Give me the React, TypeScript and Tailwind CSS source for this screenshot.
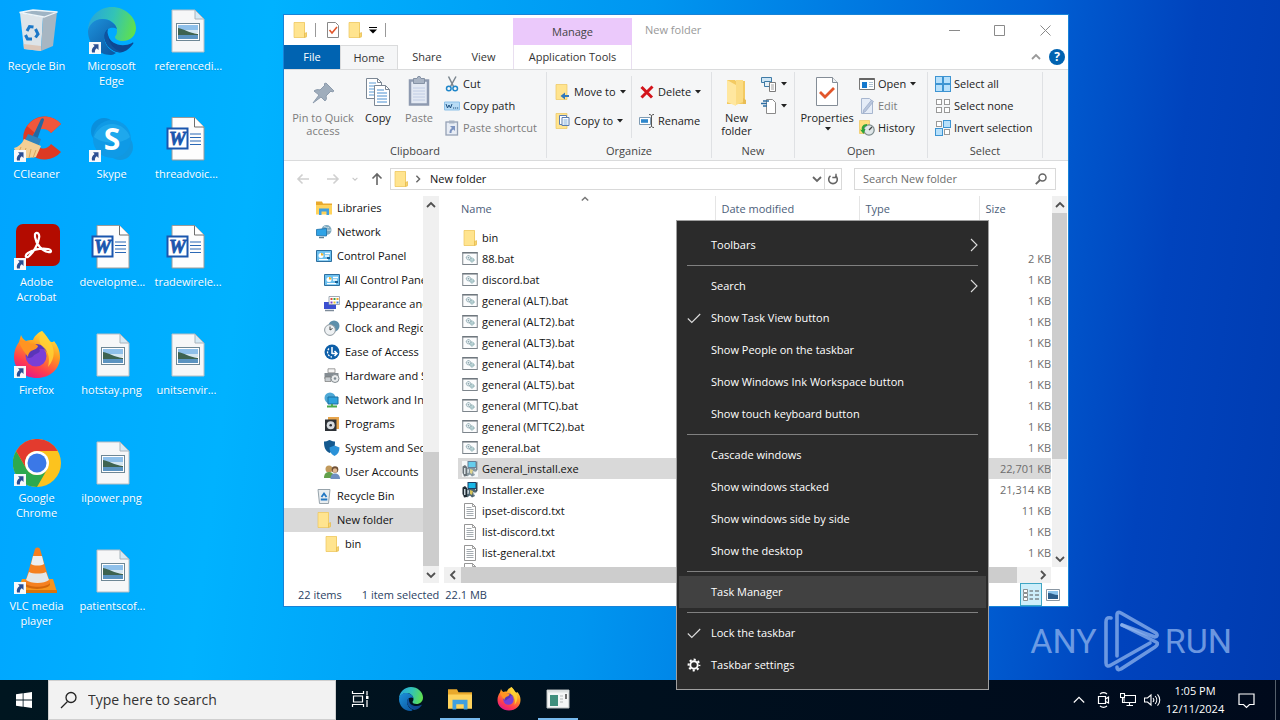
import React from 'react'

type IconProps = { className?: string }

/* ---------- small shared icons ---------- */

const Folder = ({ className = 'size-4' }: IconProps) => (
  <svg viewBox="0 0 16 16" className={className}>
    <path d="M2 .5h11v11l1.5-.5v4.5H2z" fill="#f7d774" />
    <path d="M2 .5h10.500v15H2z" fill="#ffe48f" stroke="#ecc65e" strokeWidth=".7" />
    <path d="M12.500 11.500l2-1v4l-2 1z" fill="#fbd66f" stroke="#e0b548" strokeWidth=".6" />
  </svg>
)

const Caret = () => (
  <svg viewBox="0 0 6 4" className="ml-px h-1 w-1.5 shrink-0">
    <path d="M0 0h6L3 3.500z" fill="#222" />
  </svg>
)

const BatIcon = ({ className = 'size-4' }: IconProps) => (
  <svg viewBox="0 0 16 16" className={className}>
    <rect x=".75" y="1.500" width="14.500" height="12" fill="#fbfcfd" stroke="#7d858c" />
    <path d="M.5 1.800h15" stroke="#6f777e" strokeWidth="1.500" />
    <circle cx="6.500" cy="6.700" r="2.200" fill="#dfe9ec" stroke="#7f9aa3" strokeDasharray="1 .5" />
    <circle cx="10" cy="9" r="2" fill="#cfe3e6" stroke="#6f979c" strokeDasharray="1 .5" />
    <circle cx="6.500" cy="6.700" r=".7" fill="#7f9aa3" />
    <circle cx="10" cy="9" r=".6" fill="#5d8a90" />
  </svg>
)

const TxtIcon = ({ className = 'size-4' }: IconProps) => (
  <svg viewBox="0 0 16 16" className={className}>
    <path d="M2.500.5h8l3 3v12h-11z" fill="#fff" stroke="#8a8a8a" strokeWidth=".9" />
    <path d="M10.500.5v3h3" fill="none" stroke="#8a8a8a" strokeWidth=".8" />
    <path d="M4.500 4.500h5M4.500 6.500h7M4.500 8.500h7M4.500 10.500h7M4.500 12.500h7" stroke="#8d959c" strokeWidth=".8" />
  </svg>
)

const InstallIcon = ({ className = 'size-4', faded }: IconProps & { faded?: boolean }) => (
  <svg viewBox="0 0 16 16" className={className}>
    {faded && <path d="M0 0h16v16H0z" fill="#f4f7f8" />}
    <g opacity={faded ? 0.65 : 1}>
      <rect x="6" y=".5" width="8" height="6" fill="#19b7e6" stroke="#1b3f66" />
      <path d="M14 1l1.500-1v9L14 10z" fill="#33414d" />
      <path d="M.5 5.500L3 4l2 2v9l-3 .5-1-3H.5z" fill="#1f2b33" />
      <path d="M5 7h8l2 3-2 1v3l-3 1.500-2-2-3 2z" fill="#4c6470" />
      <path d="M8 8l3 1-1 4-2-1z" fill="#d6c257" />
      <path d="M2 7h1.500v6H2z" fill="#c9d3d9" />
      <path d="M11 10l3 1-2 3zM5.500 8l1.500.5L6.500 12H5.500z" fill="#e8eef1" />
    </g>
  </svg>
)

const Chevron = ({ d, className = 'size-2.5' }: IconProps & { d: 'up' | 'down' | 'left' | 'right' }) => {
  const paths = { up: 'M1 7l4-4 4 4', down: 'M1 3l4 4 4-4', left: 'M7 1L3 5l4 4', right: 'M3 1l4 4-4 4' }
  return (
    <svg viewBox="0 0 10 10" className={className}>
      <path d={paths[d]} fill="none" stroke="currentColor" strokeWidth="1.800" />
    </svg>
  )
}

/* ---------- desktop icons ---------- */

const ShortcutArrow = () => (
  <svg viewBox="0 0 12 12" className="absolute bottom-px left-px size-3">
    <path d="M0 0h12v12H0z" fill="#f7f9fb" />
    <path d="M4 2.200h5.500V8L7.800 6.200C6.300 7.300 5.700 8.500 6 10.500H3C2.300 7.800 3.400 5.500 5.600 4z" fill="#2b4f93" />
  </svg>
)

const RecycleBinBig = () => (
  <svg viewBox="0 0 48 48" className="size-12">
    <path d="M7 6l23 4-2 34-17-2z" fill="#dde4e9" />
    <path d="M30 10l14-5-4 34-12 5z" fill="#a7b6c2" />
    <path d="M6.500 5.500L20 3l24.500 2L31 10z" fill="#9fb4c4" stroke="#eef4f8" strokeWidth="1.300" />
    <path d="M10.500 37l17.500 2v5l-17-2z" fill="#dcbfae" opacity=".8" />
    <g fill="none" stroke="#1c78c8" strokeWidth="3">
      <path d="M14 24l2.500-4.500 4 .5" />
      <path d="M22.500 22l2.500 5-2.500 3.500" />
      <path d="M19 32h-4.500L12.500 28" />
    </g>
  </svg>
)

const EdgeLogo = ({ className = 'size-12' }: IconProps) => (
  <svg viewBox="0 0 48 48" className={className}>
    <defs>
      <linearGradient id="edge-top" x1="0" y1=".3" x2="1" y2=".5">
        <stop offset="0" stopColor="#27a5dc" />
        <stop offset=".5" stopColor="#32c3b7" />
        <stop offset="1" stopColor="#5fe04e" />
      </linearGradient>
      <linearGradient id="edge-left" x1="0" y1="0" x2=".8" y2="1">
        <stop offset="0" stopColor="#1d93dc" />
        <stop offset="1" stopColor="#0c59a4" />
      </linearGradient>
    </defs>
    <path d="M0 24C0 10 11 0 24 0s24 10 24 21c0 8-6 13-13 13-5 0-8-2-8-4 0-1 2-2 2-6 0-6-6-12-14-12C8 12 2 17 0 24z" fill="url(#edge-top)" />
    <path d="M0 24c1-7 7-12 14-12 8 0 14 5 15 10-3-2-10-2-12 4-3 8 3 17 11 20-2 1-3 2-5 2C10 48 0 37 0 24z" fill="url(#edge-left)" />
    <path d="M20 22c-6 4-4 14 2 19 6 6 15 7 23-4 1-1 0-2-1-1-10 5-22 1-24-8-1-2-1-4 0-6z" fill="#0e4792" />
    <path d="M20 22c-6 4-4 14 2 19 3 3 8 5 12 4-8-2-13-8-14-17-1-2-1-4 0-6z" fill="#10549f" />
  </svg>
)

const CCleanerLogo = () => (
  <svg viewBox="0 0 48 48" className="size-12">
    <path d="M48 9A21.500 21.500 0 1 0 48 37L38 29a10 10 0 1 1 0-11z" fill="#dd3a24" />
    <path d="M48 9A21.500 21.500 0 0 0 14 11l8 7a10 10 0 0 1 16 0z" fill="#f0573b" />
    <path d="M28 4c1-1 3-1 3 1l-7 20-5-2z" fill="#2369a2" />
    <path d="M15 19l13 5-3 9-14-6z" fill="#2e83bd" />
    <path d="M11 24l17 7-5 11-17 2-5-11c4-1 8-4 10-9z" fill="#f3cf95" />
    <path d="M8 32l-3 7M13 33l-3 9M18 34l-2 9M23 35l-3 8" stroke="#d9a65b" strokeWidth="1" />
  </svg>
)

const SkypeLogo = () => (
  <svg viewBox="0 0 48 48" className="size-12">
    <circle cx="16" cy="16" r="13" fill="#0a8fdc" />
    <circle cx="32" cy="32" r="13" fill="#1198e0" />
    <circle cx="24" cy="24" r="19" fill="#0f9ae6" />
    <path d="M6 22a19 19 0 0 1 36 0c-8 7-26 8-36 0z" fill="#28b2f2" opacity=".6" />
    <text x="24" y="35" textAnchor="middle" fontSize="30" fontWeight="700" fill="#fff" fontFamily="Open Sans, sans-serif">S</text>
  </svg>
)

const AcrobatLogo = () => (
  <svg viewBox="0 0 48 48" className="size-12">
    <rect x="3" y="1" width="44" height="42" rx="7" fill="#b30b00" />
    <path
      d="M22 11c2-3 5 0 4 4-1 7-6 15-11 19-3 1-3-2 0-4 5-3 13-5 20-4 4 1 4 4 0 3-6-1-12-8-13-15 0-1 0-2 0-3z"
      fill="none" stroke="#fff" strokeWidth="2.200"
    />
  </svg>
)

const FirefoxLogo = ({ className = 'size-12' }: IconProps) => (
  <svg viewBox="0 0 48 48" className={className}>
    <defs>
      <linearGradient id="fx-body" x1=".8" y1="0" x2=".3" y2="1">
        <stop offset="0" stopColor="#fff04a" />
        <stop offset=".4" stopColor="#ff9a1f" />
        <stop offset=".75" stopColor="#ff3d4f" />
        <stop offset="1" stopColor="#e3168c" />
      </linearGradient>
    </defs>
    <path d="M29 0c3 3 5 6 7 9 1 2 4 3 5 1 4 5 6 10 6 16 0 12-10 21-23 21S1 38 1 26c0-6 2-11 5-15l2-7c1 3 3 5 5 6 2-1 4-1 7-1 1-3 4-7 9-9z" fill="url(#fx-body)" />
    <circle cx="23" cy="25" r="10.500" fill="#7a3fd6" />
    <path d="M13 22c0-6 5-9 10-9 6 0 10 4 11 8-2-3-5-4-8-3 2 2 0 4-3 5-3 1-3 4-7 4-2 0-3-2-3-5z" fill="#5a35b8" />
    <path d="M6 11c4-2 9-1 12 2 3-1 5 0 7 2 0 2-4 4-7 5-2 2-3 3-3 6-3-4-7-9-9-15z" fill="#ff9422" />
    <path d="M29 0c3 3 5 6 7 9 6 8 7 18-1 27 2-8 1-15-5-20-5-4-4-11-1-16z" fill="#ffd536" opacity=".8" />
  </svg>
)

const ChromeLogo = () => (
  <svg viewBox="0 0 48 48" className="size-12">
    <circle cx="24" cy="24" r="24" fill="#fcc31e" />
    <path d="M3.200 12A24 24 0 0 0 24 48l10.400-18A12 12 0 0 1 13.600 30z" fill="#2da94f" />
    <path d="M3.200 12A24 24 0 0 1 44.800 12H24A12 12 0 0 0 13.600 30z" fill="#e33b2e" />
    <circle cx="24" cy="24" r="12" fill="#fff" />
    <circle cx="24" cy="24" r="9.500" fill="#3b78e7" />
  </svg>
)

const VlcLogo = () => (
  <svg viewBox="0 0 48 48" className="size-12">
    <path d="M9 32h31l4 13H4z" fill="#f7941d" />
    <path d="M4 43h40v3H4z" fill="#d9730c" />
    <ellipse cx="24" cy="37" rx="13" ry="5" fill="#d4660a" />
    <path d="M22 2c1-2 4-2 5 0l10 34c-4 5-21 5-25 0z" fill="#f58020" />
    <path d="M20 9h9l2 8c-3 2-10 2-13 0z" fill="#eceff1" />
    <path d="M16 25c4 2 13 2 17 0l3 8c-5 4-18 4-23 0z" fill="#e3e6e8" />
  </svg>
)

const WordFile = () => (
  <svg viewBox="0 0 48 48" className="size-12">
    <path d="M9 2.500h22.500L41 12v33H9z" fill="#fdfdfd" stroke="#9a9a9a" />
    <path d="M31.500 2.500V12H41" fill="#fff" stroke="#6e6e6e" />
    <path d="M27 19h11M27 22.500h11M27 26h11M27 29.500h11" stroke="#2b68b5" strokeWidth="1.200" />
    <rect x="4.500" y="13.500" width="20" height="20" fill="#fff" stroke="#1a56ae" strokeWidth="2" />
    <text x="14.500" y="30" textAnchor="middle" fontSize="19" fontStyle="italic" fontWeight="700" fill="#1a56ae" stroke="#1a56ae" strokeWidth=".8" fontFamily="Liberation Serif, serif">W</text>
  </svg>
)

const PngFile = () => (
  <svg viewBox="0 0 48 48" className="size-12">
    <path d="M9 3h23l9 9v33H9z" fill="#f6f7f8" stroke="#b9bec3" />
    <path d="M32 3v9h9z" fill="#d5e9f5" stroke="#a9b4bc" />
    <rect x="13.500" y="16.500" width="23" height="17" fill="#fff" stroke="#6e8795" />
    <path d="M15 18h20v6H15z" fill="#8fc0ea" />
    <path d="M15 23h20v3H15z" fill="#d4e6f2" />
    <path d="M15 21c6 1 11 5 20 6v1H15z" fill="#3e6350" />
    <path d="M15 28h20v4H15z" fill="#5b93c0" />
  </svg>
)

const desktopIcons: { label: string; icon: React.ReactNode; shortcut?: boolean }[] = [
  { label: 'Recycle Bin', icon: <RecycleBinBig /> },
  { label: 'CCleaner', icon: <CCleanerLogo />, shortcut: true },
  { label: 'Adobe Acrobat', icon: <AcrobatLogo />, shortcut: true },
  { label: 'Firefox', icon: <FirefoxLogo />, shortcut: true },
  { label: 'Google Chrome', icon: <ChromeLogo />, shortcut: true },
  { label: 'VLC media player', icon: <VlcLogo />, shortcut: true },
  { label: 'Microsoft Edge', icon: <EdgeLogo />, shortcut: true },
  { label: 'Skype', icon: <SkypeLogo />, shortcut: true },
  { label: 'developme...', icon: <WordFile /> },
  { label: 'hotstay.png', icon: <PngFile /> },
  { label: 'ilpower.png', icon: <PngFile /> },
  { label: 'patientscof...', icon: <PngFile /> },
  { label: 'referencedi...', icon: <PngFile /> },
  { label: 'threadvoic...', icon: <WordFile /> },
  { label: 'tradewirele...', icon: <WordFile /> },
  { label: 'unitsenvir...', icon: <PngFile /> },
]

const DesktopIcons = () => (
  <div className="-ml-px grid w-max auto-cols-[75px] grid-flow-col grid-rows-[repeat(6,108px)]">
    {desktopIcons.map((item) => (
      <button key={item.label} className="flex flex-col items-center gap-[3px] pt-[7px] leading-[15px] text-white">
        <span className="relative">
          {item.icon}
          {item.shortcut && <ShortcutArrow />}
        </span>
        <span className="w-[72px] px-1 text-center text-shadow-2xs">{item.label}</span>
      </button>
    ))}
  </div>
)

/* ---------- ribbon ---------- */

const Pin = () => (
  <svg viewBox="0 0 32 32" className="size-8">
    <path d="M19 7l8 8-2 1-1-1-5 5c1 3 0 4-1 5l-4-4-8 6 6-8-5-4c1-1 4-2 6-1l5-5-1-1z" fill="#9fadbc" stroke="#8d9cad" />
  </svg>
)

const Copy = () => (
  <svg viewBox="0 0 32 32" className="size-8">
    <path d="M4.500 2.500h11l4 4v16h-15z" fill="#fff" stroke="#7b8794" />
    <path d="M15.500 2.500v4h4" fill="none" stroke="#7b8794" />
    <path d="M7 7h7M7 10h10M7 13h6M7 16h5M7 19h5" stroke="#5a9bd5" />
    <path d="M12.500 9.500h11l4 4v16h-15z" fill="#fff" stroke="#7b8794" />
    <path d="M23.500 9.500v4h4" fill="none" stroke="#7b8794" />
    <path d="M15 14h7M15 17h10M15 20h10M15 23h10M15 26h10" stroke="#4a8fd0" />
  </svg>
)

const Paste = () => (
  <svg viewBox="0 0 32 32" className="size-8">
    <rect x="7" y="4.500" width="18" height="24" fill="#e3e9f3" stroke="#8e9ab0" strokeWidth="2.500" />
    <path d="M10.500 2.500H14l1-2h2l1 2h3.500v5h-11z" fill="#a9b4c4" stroke="#8592a5" />
    <path d="M10 12h12M10 15h12M10 18h12M10 21h12M10 24h12" stroke="#c0cce4" />
  </svg>
)

const NewFolderBig = () => (
  <svg viewBox="0 0 32 32" className="size-8">
    <path d="M6 4h8l1 1h9v23H6z" fill="#f3ca62" />
    <path d="M6 4l9 5v21l-9-4z" fill="#ffe79f" />
    <path d="M15 4h7v22l-7 3z" fill="#fbdc84" />
    <path d="M22 22l3 2v4h-3z" fill="#e9bd55" />
  </svg>
)

const Properties = () => (
  <svg viewBox="0 0 32 32" className="size-8">
    <path d="M5.500 1.500h16l5 5v23h-21z" fill="#fff" stroke="#848d97" />
    <path d="M21.500 1.500v5h5" fill="#eef1f4" stroke="#848d97" />
    <path d="M9 16l5 5 9-9" fill="none" stroke="#e2562b" strokeWidth="2.800" />
  </svg>
)

const Scissors = () => (
  <svg viewBox="0 0 16 16" className="size-4">
    <path d="M4.500.5l5 10M12 .5l-5.500 10" stroke="#7b858e" strokeWidth="1.500" />
    <circle cx="4.800" cy="12.500" r="2.300" fill="none" stroke="#1f86c9" strokeWidth="1.500" />
    <circle cx="11.200" cy="12.500" r="2.300" fill="none" stroke="#1f86c9" strokeWidth="1.500" />
  </svg>
)

const CopyPath = () => (
  <svg viewBox="0 0 16 16" className="size-4">
    <path d="M.5 4h15v8H.5z" fill="#b8dcf6" stroke="#8cc0e8" />
    <path d="M2 6l1.500 4L5 7l1.500 3L8 6" fill="none" stroke="#1b4e7e" />
    <path d="M9 10h1.200M11 10h1.200M13 10h1.200" stroke="#1b4e7e" strokeWidth="1.200" />
  </svg>
)

const PasteShortcut = () => (
  <svg viewBox="0 0 16 16" className="size-4">
    <rect x="2" y="2" width="11.500" height="13" fill="#e8edf5" stroke="#95a1b5" strokeWidth="1.300" />
    <path d="M5 .5h5.500v3H5z" fill="#a9b4c4" />
    <path d="M6 6h5v5L9.500 9.500C8 10 7.500 11 7.500 13H5.500c0-3 1-4 2.500-5z" fill="#7c93c0" />
  </svg>
)

const MoveTo = () => (
  <svg viewBox="0 0 16 16" className="size-4">
    <path d="M1 .5h11v15H1z" fill="#ffe48f" stroke="#ecc65e" strokeWidth=".7" />
    <path d="M14 11h-4V8.500L5.500 12l4.500 3.500V13h4z" fill="#3179bd" />
  </svg>
)

const CopyTo = () => (
  <svg viewBox="0 0 16 16" className="size-4">
    <path d="M1 .5h11v15H1z" fill="#ffe48f" stroke="#ecc65e" strokeWidth=".7" />
    <path d="M4.500 2.500h7v9h-7z" fill="#fff" stroke="#5b7db1" />
    <path d="M7 4.500h7v8H7z" fill="#fff" stroke="#5b7db1" />
    <path d="M8.500 7h4M8.500 9h4M8.500 11h4" stroke="#5b9bd5" strokeWidth=".8" />
  </svg>
)

const DeleteIcon = () => (
  <svg viewBox="0 0 16 16" className="size-4">
    <path d="M2.500 3l10.500 10.500M13.500 2.500L2.500 13.500" stroke="#d3141b" strokeWidth="3" />
  </svg>
)

const RenameIcon = () => (
  <svg viewBox="0 0 16 16" className="size-4">
    <path d="M.5 4.500h11v7H.5z" fill="#fff" stroke="#7f9bb3" />
    <path d="M2 6.200h7v3.600H2z" fill="#2f87cc" />
    <path d="M10 1.500c1.500 0 2.500.5 2.500 1.500v10c0 1-1 1.500-2.500 1.500M15 1.500c-1.500 0-2.500.5-2.500 1.500M15 14.500c-1.500 0-2.500-.5-2.500-1.500" fill="none" stroke="#555" />
  </svg>
)

const NewItem = () => (
  <svg viewBox="0 0 16 16" className="size-4">
    <path d="M.5 1.500h10v5H.5z" fill="#cfe6f5" stroke="#3f7ba6" />
    <path d="M3.500 5.500h6v5h-6z" fill="#e6f1f8" stroke="#3f7ba6" />
    <path d="M8.500 6.500h6v9h-6z" fill="#fff" stroke="#7b7b7b" />
    <path d="M10 9h3M10 11h3M10 13h3" stroke="#888" strokeWidth=".8" />
  </svg>
)

const EasyAccess = () => (
  <svg viewBox="0 0 16 16" className="size-4">
    <path d="M5.500 1.500h6l3 3v11h-9z" fill="#fff" stroke="#8a8a8a" />
    <path d="M2 3h6M0 5.500h6M2 8h4" stroke="#2d6da3" strokeWidth="1.300" />
  </svg>
)

const OpenIcon = () => (
  <svg viewBox="0 0 16 16" className="size-4">
    <path d="M.5 2.500h15v11H.5z" fill="#fff" stroke="#777" />
    <path d="M.5 3h15" stroke="#666" strokeWidth="2" />
    <path d="M3 6h5v6H3z" fill="#1679cd" />
    <path d="M10 6.500h4M10 8.500h4M10 10.500h4" stroke="#9bb4c8" strokeWidth=".8" />
  </svg>
)

const EditIcon = () => (
  <svg viewBox="0 0 16 16" className="size-4">
    <path d="M2.500.5h8l3 3v12h-11z" fill="#e5ecf7" stroke="#a7b6cf" />
    <path d="M14.500 3.500l-8 10-2.500 1.500.5-3 8-10z" fill="#b9c6dd" stroke="#8fa1c1" strokeWidth=".6" />
  </svg>
)

const HistoryIcon = () => (
  <svg viewBox="0 0 16 16" className="size-4">
    <path d="M.5.5h10v13h-10z" fill="#ffdf7d" stroke="#ecc65e" strokeWidth=".7" />
    <circle cx="10" cy="10" r="5.200" fill="#dfe6e8" stroke="#7b8a8c" strokeWidth="1.200" />
    <path d="M10 10l3-3" stroke="#444" strokeWidth="1.200" />
    <path d="M8 4c-4 0-6 3-5 6l-2-.5 3.500 4.500 2-5H5c0-2 1-3 3-3z" fill="#2fa33a" />
  </svg>
)

const SelectGrid = ({ fill }: { fill: boolean[] }) => (
  <svg viewBox="0 0 16 16" className="size-4">
    {fill.map((on, i) => (
      <rect
        key={i}
        x={(i % 2 ? 8.5 : 0.5) + (on ? 0 : 1)}
        y={(i > 1 ? 8.5 : 0.5) + (on ? 0 : 1)}
        width={on ? 7 : 5}
        height={on ? 7 : 5}
        fill={on ? '#b7e0fb' : '#fff'}
        stroke={on ? '#3d94d2' : '#999'}
      />
    ))}
  </svg>
)

interface BigButtonProps {
  icon: React.ReactNode
  label: string
  className: string
  dropdown?: boolean
}
const BigButton: React.FC<BigButtonProps> = ({ icon, label, className, dropdown }) => (
  <button className={`flex shrink-0 flex-col items-center gap-[3px] pt-1 leading-[13px] ${className}`}>
    {icon}
    <span>{label}</span>
    {dropdown && <Caret />}
  </button>
)

interface SmallButtonProps {
  icon: React.ReactNode
  label: string
  dropdown?: boolean
  disabled?: boolean
  iconOnly?: boolean
}
const SmallButton: React.FC<SmallButtonProps> = ({ icon, label, dropdown, disabled, iconOnly }) => (
  <button
    disabled={disabled}
    aria-label={label}
    className="flex h-[22px] items-center gap-[3px] whitespace-nowrap text-[#222] disabled:text-[#7c7c7c]"
  >
    {icon}
    {!iconOnly && <span>{label}</span>}
    {dropdown && <Caret />}
  </button>
)

const Group = ({ title, className, children }: { title: string; className: string; children: React.ReactNode }) => (
  <section aria-label={title} className={`flex shrink-0 flex-col border-r border-[#dfe1e4] ${className}`}>
    <div className="flex flex-1 items-start">{children}</div>
    <div className="text-center leading-[14px] text-[#444]">{title}</div>
  </section>
)

const Ribbon = () => (
  <div className="flex h-[92px] border-y border-[#dadbdc] bg-[#f5f6f7] py-0.5 text-[#222]">
    <Group title="Clipboard" className="w-[263px]">
      <BigButton icon={<Pin />} label="Pin to Quick access" className="w-[78px] text-[#7c7c7c]" />
      <BigButton icon={<Copy />} label="Copy" className="w-8" />
      <BigButton icon={<Paste />} label="Paste" className="w-[50px] text-[#7c7c7c]" />
      <div className="flex flex-col pt-px">
        <SmallButton icon={<Scissors />} label="Cut" />
        <SmallButton icon={<CopyPath />} label="Copy path" />
        <SmallButton icon={<PasteShortcut />} label="Paste shortcut" disabled />
      </div>
    </Group>
    <Group title="Organize" className="w-[165px]">
      <div className="mt-1 flex h-[62px] w-[85px] flex-col gap-[7px] border-r border-[#dfe1e4] pt-[5px] pl-2">
        <SmallButton icon={<MoveTo />} label="Move to" dropdown />
        <SmallButton icon={<CopyTo />} label="Copy to" dropdown />
      </div>
      <div className="mt-1 flex flex-col gap-[7px] pt-[5px] pl-[7px]">
        <SmallButton icon={<DeleteIcon />} label="Delete" dropdown />
        <SmallButton icon={<RenameIcon />} label="Rename" />
      </div>
    </Group>
    <Group title="New" className="w-[83px]">
      <BigButton icon={<NewFolderBig />} label="New folder" className="w-[49px] px-2" />
      <div className="flex flex-col pt-px">
        <SmallButton icon={<NewItem />} label="New item" iconOnly dropdown />
        <SmallButton icon={<EasyAccess />} label="Easy access" iconOnly dropdown />
      </div>
    </Group>
    <Group title="Open" className="w-[133px]">
      <BigButton icon={<Properties />} label="Properties" className="w-16" dropdown />
      <div className="flex flex-col pt-px">
        <SmallButton icon={<OpenIcon />} label="Open" dropdown />
        <SmallButton icon={<EditIcon />} label="Edit" disabled />
        <SmallButton icon={<HistoryIcon />} label="History" />
      </div>
    </Group>
    <Group title="Select" className="w-[115px]">
      <div className="flex flex-col pt-px pl-[7px]">
        <SmallButton icon={<SelectGrid fill={[true, true, true, true]} />} label="Select all" />
        <SmallButton icon={<SelectGrid fill={[false, false, false, false]} />} label="Select none" />
        <SmallButton icon={<SelectGrid fill={[false, true, true, false]} />} label="Invert selection" />
      </div>
    </Group>
  </div>
)

/* ---------- title bar, tabs, address bar ---------- */

const TitleBar = () => (
  <div className="flex">
    <div className="flex-1">
      <div className="flex h-[30px]">
        <div className="flex w-[229px] items-center pl-2 text-[#999]">
          <Folder />
          <span className="ml-[7px] h-3.5 w-px bg-[#999]" />
          <button aria-label="Properties" className="ml-[9px]">
            <svg viewBox="0 0 16 16" className="size-4">
              <path d="M2.500.5h8l3 3v12h-11z" fill="#fff" stroke="#888" />
              <path d="M4.500 8l2.500 3 5-6" fill="none" stroke="#e2562b" strokeWidth="1.600" />
            </svg>
          </button>
          <button aria-label="New folder" className="ml-1.5"><Folder /></button>
          <button aria-label="Customize Quick Access Toolbar" className="ml-1.5">
            <svg viewBox="0 0 8 7" className="h-[7px] w-2">
              <path d="M0 .5h8" stroke="#000" />
              <path d="M0 2.500h8L4 6.500z" fill="#000" />
            </svg>
          </button>
          <span className="ml-2 h-3.5 w-px bg-[#999]" />
        </div>
        <div className="mt-[3px] flex w-[119px] items-center justify-center bg-[#ebc9fb] text-[#444]">Manage</div>
        <div className="flex items-center pl-[13px] text-[#999]">New folder</div>
      </div>
      <div className="flex h-6 items-stretch text-[#333]">
        <button className="w-14 bg-[#0063b1] text-white">File</button>
        <button className="w-[58px] border-x border-t border-[#dadbdc] bg-[#f5f6f7]">Home</button>
        <button className="w-[58px]">Share</button>
        <button className="w-[57px] pr-0.5">View</button>
        <button className="w-[119px] border-x border-[#e9dff0] whitespace-nowrap">Application Tools</button>
      </div>
    </div>
    <div className="flex flex-col items-end text-[#8a8a8a]">
      <div className="flex h-[30px]">
        <button aria-label="Minimize" className="grid w-[45px] place-items-center">
          <svg viewBox="0 0 11 11" className="size-[11px]"><path d="M0 5.500h11" stroke="currentColor" /></svg>
        </button>
        <button aria-label="Maximize" className="grid w-[45px] place-items-center">
          <svg viewBox="0 0 11 11" className="size-[11px]"><path d="M.5.5h10v10H.5z" fill="none" stroke="currentColor" /></svg>
        </button>
        <button aria-label="Close" className="grid w-[46px] place-items-center">
          <svg viewBox="0 0 11 11" className="size-[11px]"><path d="M.5.5l10 10M10.500.5l-10 10" stroke="currentColor" /></svg>
        </button>
      </div>
      <div className="flex h-6 items-center gap-2 pr-[3px]">
        <button aria-label="Minimize the Ribbon" className="text-[#999]"><Chevron d="up" /></button>
        <button aria-label="Help" className="size-4 rounded-full bg-[#0063b1] text-xs leading-4 font-bold text-white">?</button>
      </div>
    </div>
  </div>
)

const NavArrow = ({ label, d, color }: { label: string; d: string; color: string }) => (
  <button aria-label={label}>
    <svg viewBox="0 0 14 14" className={`size-3.5 ${color}`}>
      <path d={d} fill="none" stroke="currentColor" strokeWidth="1.600" />
    </svg>
  </button>
)

const AddressBar = () => (
  <div className="flex h-[35px] items-center px-3">
    <div className="flex w-[94px] items-center gap-4">
      <NavArrow label="Back" d="M13 7H2M6.500 2.500L2 7l4.500 4.500" color="text-[#d0d0d0]" />
      <NavArrow label="Forward" d="M1 7h11M7.500 2.500L12 7l-4.500 4.500" color="text-[#d0d0d0]" />
      <div className="-ml-1 flex items-center gap-3 text-[#c8c8c8]">
        <Chevron d="down" className="size-1.5" />
        <NavArrow label="Up" d="M7 13V2M2.500 6.500L7 2l4.500 4.500" color="text-[#666]" />
      </div>
    </div>
    <div className="flex h-[22px] flex-1 items-center border border-[#d9d9d9] pl-0.5 text-[#111]">
      <Folder />
      <span className="ml-[5px] text-[#666]"><Chevron d="right" className="size-2" /></span>
      <button className="ml-2">New folder</button>
      <button aria-label="Previous locations" className="ml-auto pr-0.5 text-[#666]"><Chevron d="down" /></button>
      <button aria-label="Refresh" className="grid h-full w-[17px] place-items-center border-l border-[#d9d9d9] text-[#666]">
        <svg viewBox="0 0 12 12" className="size-3">
          <path d="M8.500 2.800A4.300 4.300 0 1 1 3.500 2.800" fill="none" stroke="currentColor" strokeWidth="1.600" />
          <path d="M3 .8v3.700h3.700" fill="none" stroke="currentColor" strokeWidth="1.400" transform="matrix(-1 0 0 1 12 0)" />
        </svg>
      </button>
    </div>
    <label className="ml-3 flex h-[22px] w-[202px] items-center border border-[#d9d9d9] px-2">
      <input aria-label="Search New folder" placeholder="Search New folder" className="min-w-0 flex-1 bg-transparent outline-none placeholder:text-[#6d6d6d]" />
      <svg viewBox="0 0 12 12" className="size-3">
        <circle cx="7.500" cy="4.500" r="3.500" fill="none" stroke="#666" strokeWidth="1.500" />
        <path d="M5 7L.8 11.200" stroke="#666" strokeWidth="1.900" />
      </svg>
    </label>
  </div>
)

/* ---------- navigation tree ---------- */

const LibrariesIcon = ({ className = 'size-4' }: IconProps) => (
  <svg viewBox="0 0 16 16" className={className}>
    <path d="M0 1.500h6l1 2h9v4H0z" fill="#e9a92c" />
    <path d="M0 5h16v9.500H0z" fill="#ffd35c" />
    <path d="M3 15V8.500h10V15h-2.500v-3.500h-5V15z" fill="#3f9fe0" />
  </svg>
)

const NetworkIcon = () => (
  <svg viewBox="0 0 16 16" className="size-4">
    <circle cx="10.500" cy="6" r="5" fill="#7fa9bf" />
    <path d="M8 2.500c2 0 3 2 5 1M7 6c3-1 5 1 8 0" stroke="#c7dde6" fill="none" />
    <path d="M.5 5.500l10-1v7.500l-10-.5z" fill="#2fa3e6" stroke="#1b6ea8" strokeWidth=".8" />
    <path d="M3 13.500h5" stroke="#5f7f92" strokeWidth="1.500" />
  </svg>
)

const ControlPanelIcon = () => (
  <svg viewBox="0 0 16 16" className="size-4">
    <path d="M.5 2.500h15v11H.5z" fill="#6cc0ef" stroke="#2d6f9f" />
    <circle cx="5" cy="7.500" r="2.500" fill="#fff" />
    <path d="M5 7.500V5a2.500 2.500 0 0 1 2.500 2.500z" fill="#f0b32c" />
    <path d="M9 5.500h5M9 8h4M3 11.700h9" stroke="#fff" strokeWidth="1.300" />
    <path d="M11 9h3v2h-3z" fill="#1b5f93" />
  </svg>
)

const AppearanceIcon = () => (
  <svg viewBox="0 0 16 16" className="size-4">
    <path d="M0 6h12v7H0z" fill="#3b4fd0" />
    <path d="M1 14.500h9" stroke="#7d8b99" strokeWidth="1.500" />
    <path d="M5 .5h10.500v8H5z" fill="#fff" stroke="#8b97a3" strokeWidth=".8" />
    <path d="M6.500 2h2v2h-2z" fill="#e04a3a" />
    <path d="M9.500 2h2v2h-2z" fill="#3ca24a" />
    <path d="M12.500 2h2v2h-2z" fill="#f1a52b" />
    <path d="M6.500 5.500h2v2h-2z" fill="#7a3fc0" />
    <path d="M9.500 5.500h2v2h-2z" fill="#e5c02c" />
    <path d="M12.500 5.500h2v2h-2z" fill="#3a7fd6" />
  </svg>
)

const ClockIcon = () => (
  <svg viewBox="0 0 16 16" className="size-4">
    <circle cx="10" cy="6" r="5.500" fill="#5d8fab" />
    <circle cx="6" cy="10" r="5.400" fill="#eef1f3" stroke="#8f999f" />
    <path d="M6 6.500V10l2.500-1.500" fill="none" stroke="#444" />
  </svg>
)

const EaseIcon = () => (
  <svg viewBox="0 0 16 16" className="size-4">
    <circle cx="8" cy="8" r="7.500" fill="#0d5ea8" />
    <path d="M8 3v7M8 9.500h5M10.500 7l2.500 2.500-2.500 2.500" fill="none" stroke="#fff" strokeWidth="1.500" />
    <path d="M5 4.500A5 5 0 0 0 8 13" fill="none" stroke="#fff" strokeDasharray="2 1.200" strokeWidth="1.300" />
  </svg>
)

const HardwareIcon = () => (
  <svg viewBox="0 0 16 16" className="size-4">
    <path d="M4 .8h7v4H4z" fill="#f5f5f5" stroke="#888" strokeWidth=".8" />
    <path d="M.5 5h14v6H.5z" fill="#848c92" />
    <path d="M1 9h6v4.500H1z" fill="#c7ccd0" stroke="#777" strokeWidth=".7" />
    <circle cx="11" cy="10.500" r="4" fill="#e9ebec" stroke="#858d92" />
    <circle cx="11" cy="10.500" r="1.300" fill="#7f8a92" />
  </svg>
)

const NetInternetIcon = () => (
  <svg viewBox="0 0 16 16" className="size-4">
    <circle cx="6" cy="6" r="5.500" fill="#4fa9d6" />
    <path d="M4 5h10v7H4z" fill="#2da2dd" stroke="#1c6f9f" />
    <path d="M3 14.500h10M8 12v2.500" stroke="#4aa84a" strokeWidth="1.800" />
  </svg>
)

const ProgramsIcon = () => (
  <svg viewBox="0 0 16 16" className="size-4">
    <path d="M4 1h11v12H4z" fill="#e7a54d" />
    <path d="M1 3.500h11.500V15H1z" fill="#2d3136" />
    <circle cx="6.700" cy="9.300" r="4" fill="#d8dce0" />
    <circle cx="6.700" cy="9.300" r="1.300" fill="#2d3136" />
  </svg>
)

const ShieldIcon = () => (
  <svg viewBox="0 0 16 16" className="size-4">
    <path d="M0 1.500C3 2 4.500 0 5.500 0s3 2 5.500 1.500c0 6-1 9-5.500 11.500C1 10.500 0 7.500 0 1.500z" fill="#14598f" />
    <path d="M5.500 7.500l5-2 5 2c0 4-1.500 7-5 8.500-3.500-1.500-5-4.500-5-8.500z" fill="#2b92d8" />
  </svg>
)

const UsersIcon = () => (
  <svg viewBox="0 0 16 16" className="size-4">
    <circle cx="5" cy="5" r="3.500" fill="#c29a5c" />
    <path d="M0 14c0-4 2-6 5-6s5 2 5 6z" fill="#63a04b" />
    <circle cx="11" cy="5.500" r="3.300" fill="#6f5036" />
    <circle cx="11" cy="6.500" r="2.200" fill="#e2b991" />
    <path d="M6.500 15c0-4 2-5.500 4.500-5.500s5 1.500 5 5.500z" fill="#6f8fc0" />
  </svg>
)

const RecycleSmall = () => (
  <svg viewBox="0 0 16 16" className="size-4">
    <path d="M2 1.500h12l-1.500 14h-9z" fill="#e8edf0" stroke="#97a3ab" />
    <path d="M5.500 9L8 5.500 10.500 9M4.800 11.500h6.500" fill="none" stroke="#2277c2" strokeWidth="1.800" />
  </svg>
)

const treeItems = [
  { label: 'Libraries', icon: <LibrariesIcon />, level: 0 },
  { label: 'Network', icon: <NetworkIcon />, level: 0 },
  { label: 'Control Panel', icon: <ControlPanelIcon />, level: 0 },
  { label: 'All Control Panel Items', icon: <ControlPanelIcon />, level: 1 },
  { label: 'Appearance and Personalization', icon: <AppearanceIcon />, level: 1 },
  { label: 'Clock and Region', icon: <ClockIcon />, level: 1 },
  { label: 'Ease of Access', icon: <EaseIcon />, level: 1 },
  { label: 'Hardware and Sound', icon: <HardwareIcon />, level: 1 },
  { label: 'Network and Internet', icon: <NetInternetIcon />, level: 1 },
  { label: 'Programs', icon: <ProgramsIcon />, level: 1 },
  { label: 'System and Security', icon: <ShieldIcon />, level: 1 },
  { label: 'User Accounts', icon: <UsersIcon />, level: 1 },
  { label: 'Recycle Bin', icon: <RecycleSmall />, level: 0 },
  { label: 'New folder', icon: <Folder />, level: 0, selected: true },
  { label: 'bin', icon: <Folder />, level: 1 },
]

const NavTree = () => (
  <nav aria-label="Folders" className="w-[139px] shrink-0 overflow-hidden">
    <ul>
      {treeItems.map((item) => (
        <li key={item.label} className={item.selected ? 'bg-[#d9d9d9]' : ''}>
          <button className={`flex h-6 items-center gap-[5px] whitespace-nowrap ${item.level ? 'pl-10' : 'pl-8'}`}>
            {item.icon}
            {item.label}
          </button>
        </li>
      ))}
    </ul>
  </nav>
)

/* ---------- file list ---------- */

const files: { name: string; size: string; selected?: boolean }[] = [
  { name: 'bin', size: '' },
  { name: '88.bat', size: '2 KB' },
  { name: 'discord.bat', size: '1 KB' },
  { name: 'general (ALT).bat', size: '1 KB' },
  { name: 'general (ALT2).bat', size: '1 KB' },
  { name: 'general (ALT3).bat', size: '1 KB' },
  { name: 'general (ALT4).bat', size: '1 KB' },
  { name: 'general (ALT5).bat', size: '1 KB' },
  { name: 'general (МГТС).bat', size: '1 KB' },
  { name: 'general (МГТС2).bat', size: '1 KB' },
  { name: 'general.bat', size: '1 KB' },
  { name: 'General_install.exe', size: '22,701 KB', selected: true },
  { name: 'Installer.exe', size: '21,314 KB' },
  { name: 'ipset-discord.txt', size: '11 KB' },
  { name: 'list-discord.txt', size: '1 KB' },
  { name: 'list-general.txt', size: '1 KB' },
]

const FileIcon = ({ name }: { name: string }) => {
  if (name.endsWith('.bat')) return <BatIcon />
  if (name.endsWith('.txt')) return <TxtIcon />
  if (name.endsWith('.exe')) return <InstallIcon faded={name.startsWith('General')} />
  return <Folder />
}

const FileTable = () => (
  <table className="ml-3.5 w-[593px] table-fixed border-collapse">
    <thead>
      <tr className="h-[25px] text-left text-[#4c607a]">
        <th className="relative w-[257px] pl-[3px] font-normal">
          Name
          <span className="absolute -top-px left-[123px] text-[#777]"><Chevron d="up" className="size-2" /></span>
        </th>
        <th className="w-36 border-l border-[#e5e5e5] pl-1.5 font-normal">Date modified</th>
        <th className="w-[120px] border-l border-[#e5e5e5] pl-1.5 font-normal">Type</th>
        <th className="border-l border-[#e5e5e5] pl-1.5 font-normal">Size</th>
      </tr>
    </thead>
    <tbody>
      <tr className="h-1.5"><td colSpan={4} /></tr>
      {files.map((file) => (
        <tr key={file.name} className={`h-[21px] ${file.selected ? 'bg-[#d9d9d9]' : ''}`}>
          <td className="p-0">
            <span className="flex h-[21px] items-center gap-1 pl-1 text-[#111]">
              <FileIcon name={file.name} />
              {file.name}
            </span>
          </td>
          <td />
          <td />
          <td className="p-0 text-right whitespace-nowrap text-[#6d6d6d]">{file.size}</td>
        </tr>
      ))}
      <tr>
        <td className="p-0 pl-1"><TxtIcon /></td>
      </tr>
    </tbody>
  </table>
)

const scrollV = 'grid h-[17px] w-full shrink-0 place-items-center text-[#505050]'
const scrollH = 'grid h-full w-[17px] shrink-0 place-items-center text-[#505050]'

const Explorer = () => (
  <main className="absolute top-[15px] left-[284px] flex h-[591px] w-[784px] flex-col bg-white shadow-[0_0_0_1px_#1883d7]">
    <TitleBar />
    <Ribbon />
    <AddressBar />
    <div className="flex min-h-0 flex-1 text-[#111]">
      <NavTree />
      <div className="flex w-4 shrink-0 flex-col bg-[#f0f0f0]">
        <button aria-label="Scroll up" className={scrollV}><Chevron d="up" /></button>
        <div className="flex-1" />
        <div className="h-[114px] bg-[#cdcdcd]" />
        <button aria-label="Scroll down" className={scrollV}><Chevron d="down" /></button>
      </div>
      <div className="ml-[5px] flex min-w-0 flex-1 flex-col">
        <div className="flex min-h-0 flex-1">
          <div className="min-w-0 flex-1 overflow-hidden"><FileTable /></div>
          <div className="mr-px flex w-[15px] shrink-0 flex-col bg-[#f0f0f0]">
            <button aria-label="Scroll up" className={scrollV}><Chevron d="up" /></button>
            <div className="h-[246px] bg-[#cdcdcd]" />
            <div className="flex-1" />
            <button aria-label="Scroll down" className={scrollV}><Chevron d="down" /></button>
          </div>
        </div>
        <div className="mr-[17px] flex h-4 bg-[#f0f0f0]">
          <button aria-label="Scroll left" className={scrollH}><Chevron d="left" /></button>
          <div className="w-[556px] bg-[#cdcdcd]" />
          <div className="flex-1" />
          <button aria-label="Scroll right" className={scrollH}><Chevron d="right" /></button>
        </div>
      </div>
    </div>
    <footer className="flex h-[23px] items-center pr-2 pl-3.5 text-[#2b3f63]">
      <span>22 items</span>
      <span className="ml-5">1 item selected</span>
      <span className="ml-1.5">22.1 MB</span>
      <button aria-label="Details view" className="ml-auto grid h-[23px] w-[22px] place-items-center border border-[#3fa6c4] bg-[#cdeefa]">
        <svg viewBox="0 0 16 14" className="h-3.5 w-4">
          <path d="M.5 1.500h4v3h-4zM.5 5.500h4v3h-4zM.5 9.500h4v3h-4z" fill="#fff" stroke="#777" strokeWidth=".8" />
          <path d="M6.500 3H10M6.500 7H10M6.500 11H10M12 3h4M12 7h4M12 11h4" stroke="#555" />
        </svg>
      </button>
      <button aria-label="Large icons view" className="ml-1">
        <svg viewBox="0 0 14 12" className="h-3 w-3.5">
          <path d="M.5.5h13v11H.5z" fill="#fff" stroke="#8a97a3" />
          <path d="M2 2h10v5H2z" fill="#8cc4ec" />
          <path d="M2 4c4 0 6 2 10 2v4H2z" fill="#2b5d8a" />
        </svg>
      </button>
    </footer>
  </main>
)

/* ---------- taskbar context menu ---------- */

interface MenuEntry {
  label: string
  mark?: 'check' | 'gear'
  submenu?: boolean
  active?: boolean
}

const menuGroups: MenuEntry[][] = [
  [{ label: 'Toolbars', submenu: true }],
  [
    { label: 'Search', submenu: true },
    { label: 'Show Task View button', mark: 'check' },
    { label: 'Show People on the taskbar' },
    { label: 'Show Windows Ink Workspace button' },
    { label: 'Show touch keyboard button' },
  ],
  [
    { label: 'Cascade windows' },
    { label: 'Show windows stacked' },
    { label: 'Show windows side by side' },
    { label: 'Show the desktop' },
  ],
  [{ label: 'Task Manager', active: true }],
  [
    { label: 'Lock the taskbar', mark: 'check' },
    { label: 'Taskbar settings', mark: 'gear' },
  ],
]

const MenuMark = ({ mark }: { mark?: 'check' | 'gear' }) => {
  if (mark === 'check')
    return (
      <svg viewBox="0 0 14 14" className="size-3.5">
        <path d="M.8 7.500l4 4L13.200 3" fill="none" stroke="#ddd" strokeWidth="1.100" />
      </svg>
    )
  if (mark === 'gear')
    return (
      <svg viewBox="0 0 14 14" className="size-3.5">
        <circle cx="7" cy="7" r="3.700" fill="none" stroke="#fff" strokeWidth="1.900" />
        <circle cx="7" cy="7" r="5.400" fill="none" stroke="#fff" strokeWidth="2" strokeDasharray="2.100 2.140" strokeDashoffset="1" />
      </svg>
    )
  return null
}

const ContextMenu = () => (
  <div role="menu" className="absolute top-[220px] left-[676px] w-[313px] border border-[#a0a0a0] bg-[#2b2b2b] px-0.5 py-2 text-white">
    {menuGroups.map((group, i) => (
      <React.Fragment key={i}>
        {i > 0 && <hr className="mx-2 my-1 border-[#808080]" />}
        {group.map((entry) => (
          <button
            key={entry.label}
            role={entry.mark === 'check' ? 'menuitemcheckbox' : 'menuitem'}
            aria-checked={entry.mark === 'check' ? true : undefined}
            className={`flex h-8 w-full items-center px-2 text-left ${entry.active ? 'bg-[#414141]' : ''}`}
          >
            <span className="w-6 shrink-0"><MenuMark mark={entry.mark} /></span>
            <span className="flex-1 whitespace-nowrap">{entry.label}</span>
            {entry.submenu && (
              <svg viewBox="0 0 8 14" className="h-3.5 w-2">
                <path d="M1 1l6 6-6 6" fill="none" stroke="#ddd" strokeWidth="1.100" />
              </svg>
            )}
          </button>
        ))}
      </React.Fragment>
    ))}
  </div>
)

/* ---------- taskbar ---------- */

const TaskButton = ({ label, running, children }: { label: string; running?: boolean; children: React.ReactNode }) => (
  <button
    aria-label={label}
    className={`flex h-10 w-10 items-center justify-center border-b-2 ${running ? 'border-[#76b9ed]' : 'border-transparent'}`}
  >
    {children}
  </button>
)

const Taskbar = () => (
  <footer className="flex h-10 shrink-0 items-stretch bg-linear-to-r from-[#001620] to-[#000a1c] text-white">
    <button aria-label="Start" className="grid w-12 place-items-center">
      <svg viewBox="0 0 16 16" className="size-4">
        <path d="M0 2.300L6.700 1.300v6.300H0zM7.500 1.200L16 0v7.600H7.500zM0 8.400h6.700v6.300L0 13.700zM7.500 8.400H16V16l-8.500-1.200z" fill="#fff" />
      </svg>
    </button>
    <label className="flex w-72 items-center gap-2.5 border border-[#cfcfcf] bg-[#f2f2f2] pl-[11px]">
      <svg viewBox="0 0 18 18" className="size-[18px]">
        <circle cx="11" cy="6.500" r="5" fill="none" stroke="#222" strokeWidth="1.300" />
        <path d="M7.500 10.500L1 17" stroke="#222" strokeWidth="1.300" />
      </svg>
      <input aria-label="Type here to search" placeholder="Type here to search" className="min-w-0 flex-1 bg-transparent text-sm outline-none placeholder:text-[#333]" />
    </label>
    <div className="flex gap-[9px] pl-1">
      <div className="mr-0.5">
        <TaskButton label="Task View">
          <svg viewBox="0 0 18 16" className="h-4 w-[18px]">
            <path d="M1.500 0v3M12.500 0v3M1.500 2.500h11M2.500 5h9v6h-9zM1.500 16v-3M12.500 16v-3M1.500 13.500h11M16 0v4.500M16 9v7" fill="none" stroke="#fff" strokeWidth="1.200" />
            <path d="M15 5h2.500v3H15z" fill="#fff" />
          </svg>
        </TaskButton>
      </div>
      <TaskButton label="Microsoft Edge"><EdgeLogo className="size-6" /></TaskButton>
      <TaskButton label="File Explorer" running><LibrariesIcon className="size-6" /></TaskButton>
      <TaskButton label="Firefox"><FirefoxLogo className="size-6" /></TaskButton>
      <TaskButton label="Installer" running>
        <svg viewBox="0 0 24 20" className="h-5 w-6">
          <path d="M1 1h22v18H1z" fill="#f4f6f6" stroke="#b7bdbd" />
          <path d="M1 1.500h22v2H1z" fill="#dde2e2" />
          <path d="M4 6h8v11H4z" fill="#3f8f7d" />
          <path d="M14 7h3M14 10h3M14 13h3" stroke="#b3b8b8" />
          <path d="M20 5v5" stroke="#444" strokeWidth="1.500" />
        </svg>
      </TaskButton>
    </div>
    <div className="ml-auto flex items-center">
      <button aria-label="Show hidden icons" className="mr-3">
        <svg viewBox="0 0 12 12" className="size-3"><path d="M.8 8.500L6 3.300l5.200 5.200" fill="none" stroke="#fff" strokeWidth="1.200" /></svg>
      </button>
      <button aria-label="Meet Now" className="mr-2.5">
        <svg viewBox="0 0 13 16" className="h-4 w-[13px]">
          <path d="M3 2c2-1.500 5-1.500 7 0M3 14c2 1.500 5 1.500 7 0M1.500 4.500h7v7h-7zM8.500 7L11.500 5v6L8.500 9.500" fill="none" stroke="#fff" strokeWidth="1.200" />
        </svg>
      </button>
      <button aria-label="Network" className="mr-2">
        <svg viewBox="0 0 16 16" className="size-4">
          <path d="M4 3.500h11.500v7H4zM9.500 10.500v3M6.500 13.500h6.500" fill="none" stroke="#fff" strokeWidth="1.100" />
          <path d="M.5 1.500h4v4h-4zM2.500 5.500v5H4" fill="#00101c" stroke="#fff" strokeWidth="1.100" />
        </svg>
      </button>
      <button aria-label="Volume" className="mr-[3px]">
        <svg viewBox="0 0 17 16" className="h-4 w-[17px]">
          <path d="M.5 6h3L7 3v10l-3.500-3H.5zM9 6c1 1.200 1 2.800 0 4M11.200 4c2 2.300 2 5.700 0 8M13.500 2.300c3 3.300 3 8.100 0 11.400" fill="none" stroke="#fff" strokeWidth="1.100" />
        </svg>
      </button>
      <button className="w-[62px] text-center leading-[18px] whitespace-nowrap">
        1:05 PM<br />12/11/2024
      </button>
      <button aria-label="Notifications" className="mr-5 ml-3">
        <svg viewBox="0 0 17 17" className="size-[17px]">
          <path d="M1 2h15v10.500h-4.500L8.500 15.500l-3-3H1z" fill="none" stroke="#fff" strokeWidth="1.200" />
        </svg>
      </button>
      <button aria-label="Show desktop" className="h-full w-[5px] border-l border-[#55606b]" />
    </div>
  </footer>
)

const Watermark = () => (
  <div className="absolute right-12 bottom-2 flex items-center gap-1.5 font-['Roboto',sans-serif] text-[34px] leading-none text-[#8fb4ee]/75">
    <span>ANY</span>
    <svg viewBox="0 0 56 62" className="h-[62px] w-14" fill="none" stroke="currentColor" strokeWidth="3.600" strokeLinejoin="round" strokeLinecap="round">
      <path d="M8 8C4 7 3 9 3 12v41c0 3 2 4 5 2l39-22" />
      <path d="M14 46V5c0-3 2-3 4-2l35 20c2 2 1 4-1 4L19 15" />
      <path d="M14 57c0 3 2 3 4 2l34-22c3-2 3-4 1-5L19 15" />
    </svg>
    <span>RUN</span>
  </div>
)

const App: React.FC = () => {
  return (
    <div className="relative flex h-screen flex-col overflow-hidden bg-[#00acff] font-['Open_Sans','Noto_Sans',sans-serif] text-[11px] leading-4">
      <div className="relative min-h-0 flex-1 bg-[linear-gradient(97deg,#00a4ff_0%,#00b2ff_20%,#0096f0_48%,#0060d4_76%,#0043bd_88%,#003bb0_100%)]">
        <DesktopIcons />
        <Watermark />
        <Explorer />
      </div>
      <Taskbar />
      <ContextMenu />
    </div>
  )
}

export default App
